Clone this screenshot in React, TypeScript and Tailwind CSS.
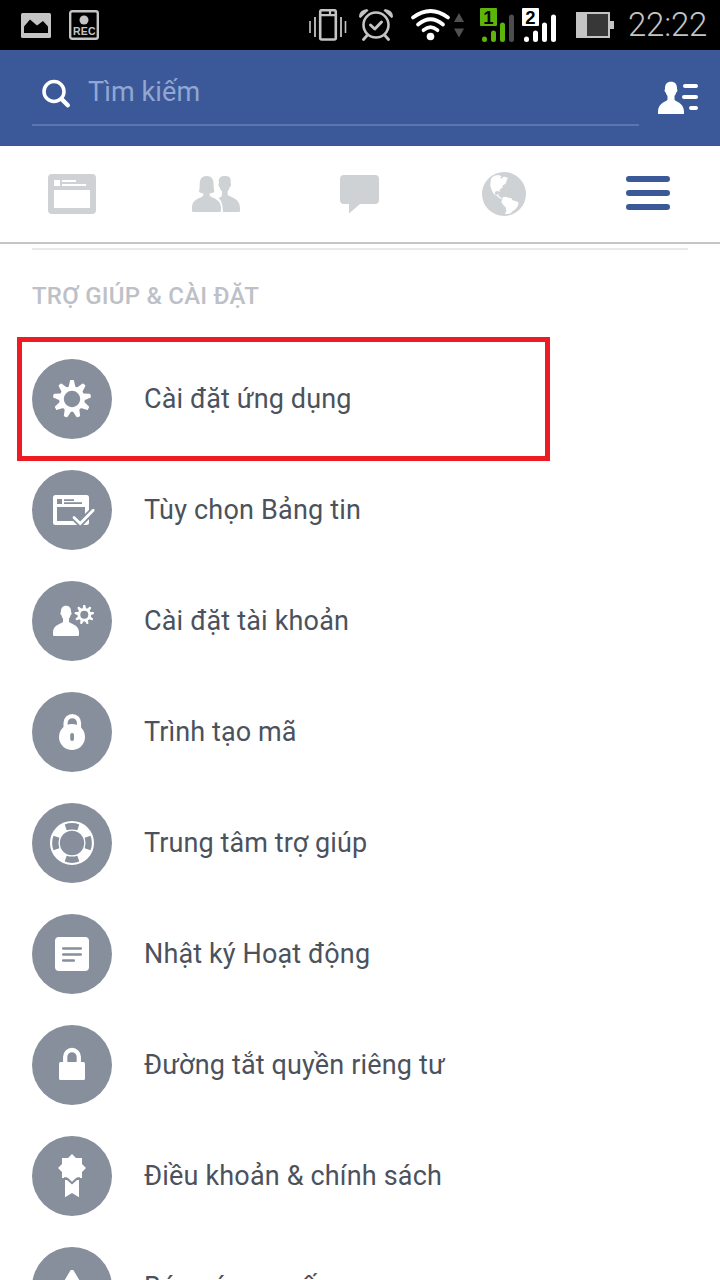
import type { ReactNode } from "react";

const FONT = "font-['Roboto','Noto_Sans',sans-serif]";
const GRAY = "#868f9b";

function Gear({ cx, cy, outer, body, hole, tip }: { cx: number; cy: number; outer: number; body: number; hole: number; tip: number }) {
  const teeth = Array.from({ length: 9 }, (_, i) => i * 40);
  return (
    <g fill="#fff" stroke="#fff" strokeLinejoin="round" strokeWidth={tip * 0.6}>
      {teeth.map((a) => (
        <path
          key={a}
          transform={`translate(${cx} ${cy}) rotate(${a})`}
          d={`M${-tip * 0.3} ${-outer + tip * 0.3}H${tip * 0.3}L${tip * 0.7} ${-body + 1}H${-tip * 0.7}Z`}
        />
      ))}
      <circle cx={cx} cy={cy} r={(body + hole) / 2} fill="none" strokeWidth={body - hole} />
    </g>
  );
}

const arcs = [0, 90, 180, 270];

const rows: { label: string; spacing: string; icon: ReactNode }[] = [
  {
    label: "Cài đặt ứng dụng",
    spacing: "tracking-[0.12px]",
    icon: <Gear cx={40} cy={40} outer={19} body={12.8} hole={8.2} tip={3.4} />,
  },
  {
    label: "Tùy chọn Bảng tin",
    spacing: "tracking-[0.2px]",
    icon: (
      <>
        <rect x="21" y="25" width="36" height="30" rx="2.5" fill="#fff" />
        <path fill={GRAY} d="M25 29h5v5h-5zM32 29.3h10v1.8H32zM32 32.2h18v1.8H32zM25 37h28v14H25z" />
        <path d="M40 45.500l8.200 8L62 39.400" fill="none" stroke={GRAY} strokeWidth="6.500" />
        <path d="M42 47.5l6.2 6L61.2 40.2" fill="none" stroke="#fff" strokeWidth="2.8" strokeLinecap="round" />
      </>
    ),
  },
  {
    label: "Cài đặt tài khoản",
    spacing: "tracking-[0.17px]",
    icon: (
      <>
        <path
          fill="#fff"
          d="M34 24.7c3.6 0 5.2 2.6 5.1 6.2.9.6.5 3-.6 3.4-.3 1.6-.8 2.6-1.5 3.3v3.2c0 1.6 10 2.7 10 10.2v2.5c0 1-.5 1.5-1.500 1.500h-23c-1 0-1.500-.5-1.500-1.500V51c0-7.500 10-8.600 10-10.200v-3.200c-.7-.7-1.200-1.700-1.500-3.300-1.100-.4-1.500-2.800-.6-3.400-.1-3.600 1.500-6.200 5.100-6.200z"
        />
        <Gear cx={52.3} cy={33.7} outer={9.8} body={6.8} hole={4} tip={1.7} />
      </>
    ),
  },
  {
    label: "Trình tạo mã",
    spacing: "tracking-[0.1px]",
    icon: (
      <>
        <path d="M33.600 37v-6.200a6.700 6.700 0 0 1 13.400 0V37" fill="none" stroke="#fff" strokeWidth="4.200" />
        <circle cx="40" cy="45" r="13" fill="#fff" />
        <rect x="38.200" y="41" width="3.800" height="8" rx="1.900" fill={GRAY} />
      </>
    ),
  },
  {
    label: "Trung tâm trợ giúp",
    spacing: "tracking-[0.1px]",
    icon: (
      <>
        <circle cx="40" cy="40" r="17.100" fill="none" stroke="#fff" strokeWidth="9.800" />
        {arcs.map((a) => (
          <path
            key={a}
            transform={`rotate(${a} 40 40)`}
            fill={GRAY}
            d="M32.700 21.500Q40 18.700 47.300 21.500L45.300 27.300Q40 25.500 34.700 27.300Z"
          />
        ))}
      </>
    ),
  },
  {
    label: "Nhật ký Hoạt động",
    spacing: "tracking-[0.13px]",
    icon: (
      <>
        <rect x="23" y="23" width="34" height="34" rx="4" fill="#fff" />
        <path d="M31.300 34.500h17.400M31.300 40.500h17.400M31.300 46.500h10.400" stroke={GRAY} strokeWidth="2.700" strokeLinecap="round" />
      </>
    ),
  },
  {
    label: "Đường tắt quyền riêng tư",
    spacing: "tracking-[0.15px]",
    icon: (
      <>
        <path d="M33.200 38v-6.200a6.800 6.800 0 0 1 13.600 0V38" fill="none" stroke="#fff" strokeWidth="4.300" />
        <rect x="27" y="37" width="26" height="18" rx="1.500" fill="#fff" />
      </>
    ),
  },
  {
    label: "Điều khoản & chính sách",
    spacing: "tracking-[0.17px]",
    icon: (
      <>
        <path fill="#fff" d="M30 22h20v20H30zM40 18l14 14-14 14-14-14z" />
        <path fill="#fff" d="M33 44h2l5 4.500 5-4.500h2v17.200L40 57l-7 4.200z" />
        <path d="M32 42h2.500l5.500 5 5.500-5H48" fill="none" stroke={GRAY} strokeWidth="1.500" />
      </>
    ),
  },
  {
    label: "Báo cáo sự cố",
    spacing: "tracking-[0.1px]",
    icon: <path fill="#fff" stroke="#fff" strokeWidth="2" strokeLinejoin="round" d="M39.200 24h1.600L58 53H22z" />,
  },
];

function Signal({ n, color, last }: { n: string; color: string; last: string }) {
  return (
    <svg width="35" height="35" viewBox="0 0 35 35">
      <rect width="17" height="18" rx="1" fill={color} />
      <text x="8.500" y="15.600" textAnchor="middle" fontSize="18.500" fontWeight="700" fontFamily="Liberation Sans" fill="#000">
        {n}
      </text>
      <g strokeWidth="5" strokeLinecap="round" stroke={color}>
        <path d="M4.500 31v.6M13.500 25v6.500M22.500 17v14.500" />
        <path d="M31.500 9v22.500" stroke={last} />
      </g>
    </svg>
  );
}

function StatusBar() {
  return (
    <div className="flex h-[50px] items-center bg-black pl-[21px]">
      <svg width="30" height="25" viewBox="0 0 30 25">
        <rect width="30" height="25" rx="1.500" fill="#c4c4c4" />
        <path fill="#000" d="M3 20V13.500L9 6.500l7 6 6-4.500 5 5.500V20z" />
      </svg>
      <svg className="ml-[18px]" width="30" height="30" viewBox="0 0 30 30">
        <rect x="1.200" y="1.200" width="27.600" height="27.600" rx="2" fill="none" stroke="#c4c4c4" strokeWidth="2.400" />
        <circle cx="15" cy="10" r="4.500" fill="#c4c4c4" />
        <text x="15.300" y="25" textAnchor="middle" fontSize="10.500" fontWeight="700" fontFamily="Liberation Sans" letterSpacing=".2" fill="#c4c4c4">
          REC
        </text>
      </svg>
      <svg className="ml-[210px]" width="38" height="32" viewBox="0 0 38 32">
        <g fill="none" stroke="#c4c4c4">
          <rect x="11.200" y="1.200" width="15.600" height="29.300" rx="1.500" strokeWidth="2.600" />
          <path d="M1 12v12M36.500 12v12" strokeWidth="1.600" />
          <path d="M6 8v20M32 8v20" strokeWidth="1.800" />
          <path d="M12 6.200h15M21 1.500v5" strokeWidth="2.200" />
        </g>
      </svg>
      <svg className="ml-[12px]" width="34" height="32" viewBox="0 0 34 32">
        <g fill="none" stroke="#c4c4c4" strokeWidth="2.600" strokeLinecap="round" strokeLinejoin="round">
          <circle cx="17" cy="16" r="12.500" />
          <path d="M11.500 16l4.300 4L22.500 13" strokeWidth="3" />
          <path d="M8 26.500l-3.500 4M26 26.500l3.500 4" strokeWidth="2.800" />
        </g>
        <path fill="#c4c4c4" d="M0 8Q0 1 8 0L9.500 1.500 1.500 9zM34 8Q34 1 26 0L24.500 1.500 32.500 9z" />
      </svg>
      <svg className="ml-[18px]" width="40" height="32" viewBox="0 0 40 32">
        <g fill="none" stroke="#fff" strokeWidth="3.700" strokeLinecap="round">
          <path d="M2 8.500Q19.500-4.500 37 8.500" />
          <path d="M7 15.500Q19.500 5 32 15.500" />
          <path d="M12.500 21.200Q19.500 15 26.500 21.200" />
        </g>
        <circle cx="19.500" cy="27.500" r="3.800" fill="#fff" />
      </svg>
      <svg className="ml-[3px]" width="10" height="25" viewBox="0 0 10 25">
        <path fill="#505050" d="M5 0l5 9H0zM0 15.500h10L5 24.500z" />
      </svg>
      <div className="ml-[16px] flex gap-[7px]">
        <Signal n="1" color="#5eb509" last="#4d4d4f" />
        <Signal n="2" color="#ffffff" last="#ffffff" />
      </div>
      <svg className="ml-[19px]" width="38" height="26" viewBox="0 0 38 26">
        <path fill="#c4c4c4" d="M0 0h34v26H0zM34 9h4v8h-4z" />
        <path fill="#373737" d="M11 2h21v22H11z" />
      </svg>
      <span className="ml-[14px] text-[33px] leading-[50px] font-light tracking-[-0.2px] text-[#c4c4c4]">22:22</span>
    </div>
  );
}

function Header() {
  return (
    <header className="flex h-24 bg-[#3b5998] pl-8">
      <div className="flex h-[76px] w-[607px] items-start border-b-2 border-[#5b75ad] pl-[9px]">
        <svg className="mt-[29px]" width="30" height="30" viewBox="0 0 30 30">
          <circle cx="13" cy="12.500" r="10" fill="none" stroke="#fff" strokeWidth="3.500" />
          <path d="M20.500 20l6.300 6.300" stroke="#fff" strokeWidth="4.400" strokeLinecap="round" />
        </svg>
        <span className="mt-[22px] ml-[17px] text-[27px] leading-10 tracking-[0.1px] text-[#92a6d2]">Tìm kiếm</span>
      </div>
      <svg className="mt-[31px] ml-[18px]" width="42" height="34" viewBox="0 0 42 34">
        <path
          fill="#fff"
          d="M14 .8c4 0 6.200 2.500 6 7.100.8.700.4 3.200-.8 3.600-.4 1.700-1 2.700-1.700 3.400v3.600c0 2 9.500 2.700 9.500 12v2.500H1v-2.500c0-9.300 9.500-10 9.500-12v-3.600c-.7-.7-1.300-1.700-1.700-3.400-1.200-.4-1.600-2.900-.8-3.600C7.800 3.300 10 .8 14 .8z"
        />
        <path d="M28 5h11M27 16h12M34 27h5" stroke="#fff" strokeWidth="4" strokeLinecap="round" />
      </svg>
    </header>
  );
}

function Tabs() {
  return (
    <nav className="grid h-[98px] grid-cols-5 items-center justify-items-center border-b-2 border-[#c4c5c7] bg-white">
      <svg width="48" height="48" viewBox="0 0 48 48">
        <rect y="4" width="48" height="40" rx="4" fill="#cfd2d5" />
        <path fill="#fff" d="M6 10h6v6H6zM14 10h14v2H14zM14 14h24v2H14zM6 20h36v18H6z" />
      </svg>
      <svg width="48" height="48" viewBox="576 72 144 144">
        <path
          fill="#cfd2d5"
          d="M674 90c15-2 20 7 18 22 3 2 1 10-3 12-1 5-3 9-6 12v9c0 9 37 8 37 41v9q0 3-4 3h-47c-1-17-2-31-13-42 8-3 10-5 10-11v-9c-4-3-6-7-7-12-4-2-5-9-2-12-3-14 3-22 17-22z"
        />
        <path
          fill="#cfd2d5"
          d="M620 90c18 0 21 13 21 29 0 9 2 14 2 18-4 4-9 5-14 5v5c0 10 34 8 34 38v9q0 4-5 4h-77q-5 0-5-4v-9c0-30 34-28 34-38v-5c-4 0-9-1-13-5 1-6 2-10 2-18 0-18 4-29 21-29z"
        />
      </svg>
      <svg width="48" height="48" viewBox="0 0 48 48">
        <path fill="#cfd2d5" d="M8 5h31q4 0 4 4v21q0 4-4 4H24l-11 9.500V34H8q-4 0-4-4V9q0-4 4-4z" />
      </svg>
      <svg width="48" height="48" viewBox="360 72 144 144">
        <circle cx="432" cy="144" r="66" fill="#cfd2d5" />
        <path
          fill="#fff"
          d="M394 96l9-7 12-2 10 4-5 4 7 3 1-5 6-1 10 4-4 7-2 8-6 5-5 3 1 6-5 2-5 7 3 5-7-4-7 1-3 5 3 6 5-1 3-3 1 7 5 4 5 3-2 2-7-4-6-6-7-3-5-6-5-10-3-11 1-15z"
        />
        <path fill="#fff" d="M428 154l9-2 8 3 9 2 4 6 15 4 3 5-4 11-8 9-6 3-5 6-6 2-4 1-8 0 4-9-2-11-8-8-5-8 3-8z" />
      </svg>
      <svg width="48" height="48" viewBox="0 0 48 48">
        <path d="M5 9h38M5 23h38M5 37h38" stroke="#3b5998" strokeWidth="6" strokeLinecap="round" />
      </svg>
    </nav>
  );
}

export default function App() {
  return (
    <div className={`h-[1280px] w-[720px] overflow-hidden bg-white ${FONT}`}>
      <StatusBar />
      <Header />
      <Tabs />
      <main className="px-8 pt-1">
        <div className="h-0.5 bg-[#e9e9e9]" />
        <h2 className="mt-[30px] h-[79px] text-[24px] leading-8 font-medium tracking-[0.22px] whitespace-nowrap text-[#bdc1c7]">
          TRỢ GIÚP &amp; CÀI ĐẶT
        </h2>
        <ul className="flex flex-col gap-[31px]">
          {rows.map((row, i) => (
            <li key={row.label} className="relative flex h-20 items-center gap-8">
              <svg className="shrink-0" width="80" height="80" viewBox="0 0 80 80">
                <circle cx="40" cy="40" r="40" fill={GRAY} />
                {row.icon}
              </svg>
              <span className={`text-[27px] leading-10 whitespace-nowrap text-[#4b525d] ${row.spacing}`}>{row.label}</span>
              {i === 0 && <div className="absolute -top-[22px] -left-[15px] h-[124px] w-[533px] border-[5px] border-[#ed1c24]" />}
            </li>
          ))}
        </ul>
      </main>
    </div>
  );
}
